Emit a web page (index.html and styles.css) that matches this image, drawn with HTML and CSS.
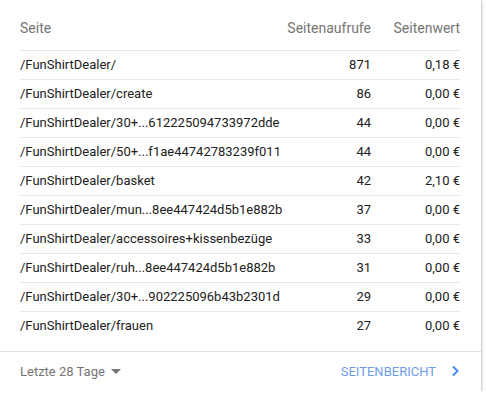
FILE: index.html
```html
<!DOCTYPE html>
<html lang="de">
<head>
<meta charset="utf-8">
<link rel="stylesheet" href="styles.css">
</head>
<body>
<div class="card">
  <table class="tbl">
    <thead>
      <tr><th class="c-page">Seite</th><th class="c-num">Seitenaufrufe</th><th class="c-val">Seitenwert</th></tr>
    </thead>
    <tbody>
      <tr><td>/FunShirtDealer/</td><td class="c-num">871</td><td class="c-val">0,18 €</td></tr>
      <tr><td>/FunShirtDealer/create</td><td class="c-num">86</td><td class="c-val">0,00 €</td></tr>
      <tr><td>/FunShirtDealer/30+...612225094733972dde</td><td class="c-num">44</td><td class="c-val">0,00 €</td></tr>
      <tr><td>/FunShirtDealer/50+...f1ae44742783239f011</td><td class="c-num">44</td><td class="c-val">0,00 €</td></tr>
      <tr><td>/FunShirtDealer/basket</td><td class="c-num">42</td><td class="c-val">2,10 €</td></tr>
      <tr><td>/FunShirtDealer/mun...8ee447424d5b1e882b</td><td class="c-num">37</td><td class="c-val">0,00 €</td></tr>
      <tr><td>/FunShirtDealer/accessoires+kissenbezüge</td><td class="c-num">33</td><td class="c-val">0,00 €</td></tr>
      <tr><td>/FunShirtDealer/ruh...8ee447424d5b1e882b</td><td class="c-num">31</td><td class="c-val">0,00 €</td></tr>
      <tr><td>/FunShirtDealer/30+...902225096b43b2301d</td><td class="c-num">29</td><td class="c-val">0,00 €</td></tr>
      <tr><td>/FunShirtDealer/frauen</td><td class="c-num">27</td><td class="c-val">0,00 €</td></tr>
    </tbody>
  </table>
  <div class="footer">
    <div class="range">Letzte 28 Tage <span class="caret"></span></div>
    <div class="report">SEITENBERICHT
      <svg class="chev" width="10" height="12" viewBox="0 0 10 12"><path d="M2 1.5 L6.5 6 L2 10.5" fill="none" stroke="#4a8af4" stroke-width="2"/></svg>
    </div>
  </div>
</div>
</body>
</html>
```
FILE: styles.css
```css
html, body { margin: 0; padding: 0; background: #fff; }
body { font-family: Roboto, "Noto Sans", sans-serif; font-size: 13px; color: #212121; }
.card {
  width: 481px;
  height: 391px;
  background: #fff;
  box-shadow: 0 1px 3px rgba(0,0,0,0.25), 1px 0 2px rgba(0,0,0,0.12);
  box-sizing: border-box;
  display: flex;
  flex-direction: column;
}
.tbl {
  margin: 0 21px 11px 20px;
  border-collapse: collapse;
  width: 440px;
}
.tbl th {
  font-weight: 400;
  font-size: 14px;
  color: #757575;
  height: 50px;
  padding: 6px 0 0 0;
  vertical-align: middle;
  text-align: left;
  box-sizing: border-box;
}
.tbl tbody td {
  border-top: 1px solid #e8e8e8;
  height: 28px;
  padding: 0;
  vertical-align: middle;
  white-space: nowrap;
}
.tbl .c-num { text-align: right; }
.tbl .c-val { text-align: right; width: 89px; }
.footer {
  border-top: 1px solid #e0e0e0;
  flex: 1;
  display: flex;
  align-items: center;
  justify-content: space-between;
  padding: 0 20px 0 20px;
  color: #757575;
}
.range { display: flex; align-items: center; gap: 6px; }
.caret {
  width: 0; height: 0;
  border-left: 5px solid transparent;
  border-right: 5px solid transparent;
  border-top: 5px solid #757575;
  margin-top: 1px;
}
.report { color: #6f9ce9; display: flex; align-items: center; gap: 15px; }
.chev { display: block; }
```
